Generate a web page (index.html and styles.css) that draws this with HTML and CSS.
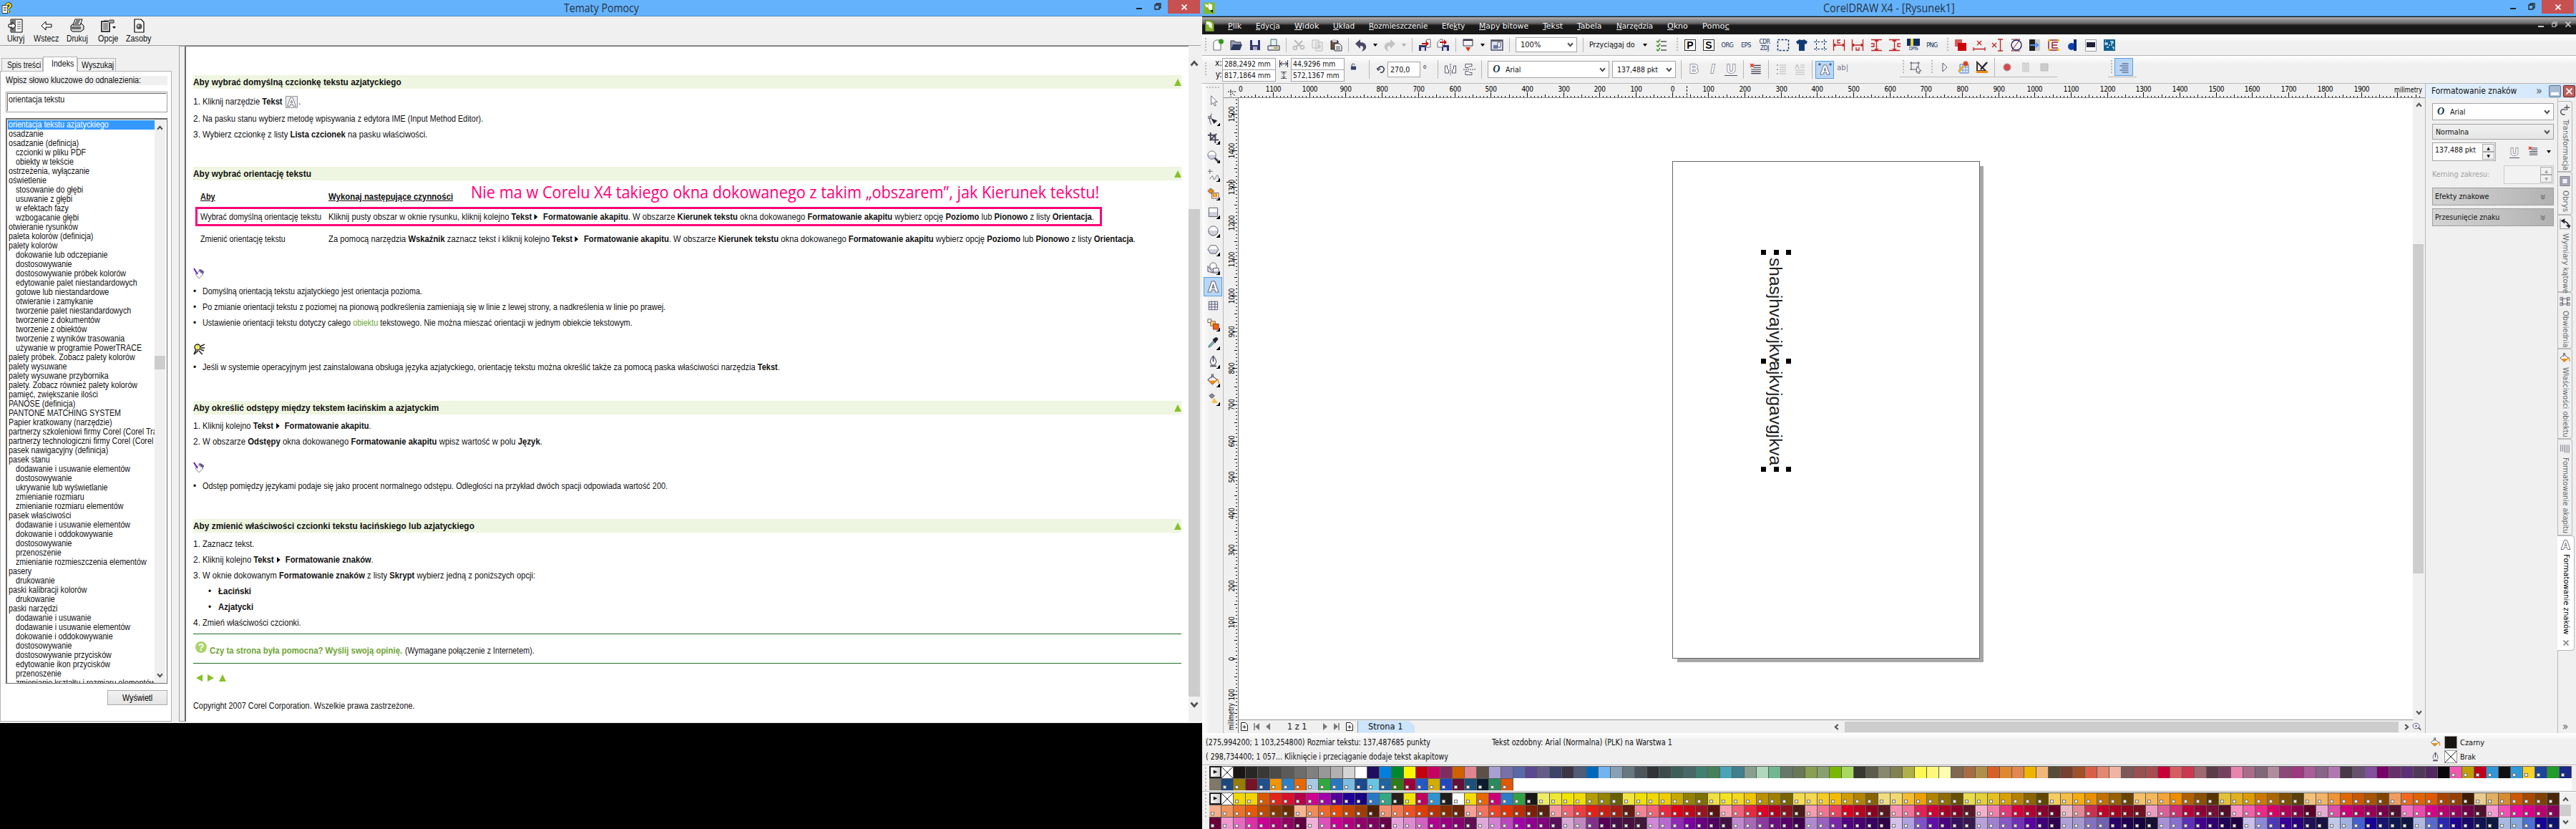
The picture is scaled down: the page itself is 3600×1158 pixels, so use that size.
FILE: index.html
```
<!DOCTYPE html>
<html lang="pl">
<head>
    <meta charset="UTF-8">
    <title>Tematy Pomocy / CorelDRAW X4</title>
    <link rel="stylesheet" href="styles.css">
</head>
<body>
    <svg class="defs">
        <linearGradient id="g" x2="0" y2="1"><stop offset=".45" stop-color="#fff"/><stop offset=".5" stop-color="#cfd0de"/></linearGradient>
        <symbol id="pen" viewBox="0 0 16 16"><path d="M3 9l5-4 6 4-6 6z" fill="#fff" stroke="#667" stroke-width=".8"/><path d="M1 1l5 8" stroke="#6a1fc0" stroke-width="2"/><path d="M7 3l3-1 5 3-1 4z" fill="#5a5a90"/></symbol>
        <symbol id="chev" viewBox="0 0 8 6"><path d="M1 1l3 3.5L7 1" fill="none" stroke="#505050" stroke-width="1.8"/></symbol>
        <symbol id="chevup" viewBox="0 0 8 6"><path d="M1 5l3-3.5L7 5" fill="none" stroke="#505050" stroke-width="1.8"/></symbol>
        <symbol id="down" viewBox="0 0 6 4"><path d="M0 0h6L3 4z"/></symbol>
        <symbol id="align" viewBox="0 0 16 16"><path d="M5 3h9M5 5.5h9M2 8h12M2 10.500h12M2 13h12" stroke="#3a3a4c"/><path d="M1 1l4 4M5 1L1 5" stroke="#e03020" stroke-width="1.500"/></symbol>
        <symbol id="bucket" viewBox="0 0 16 16"><path d="M1 8l6-5 6 5-6 6z" fill="#fff" stroke="#556"/><path d="M2 9h11l-6 5z" fill="#f08a10"/><path d="M6 6V1h2v4" fill="none" stroke="#556"/><path d="M13 7q2 1 2 6" fill="none" stroke="#f08a10" stroke-width="1.500"/></symbol>
        <symbol id="nib" viewBox="0 0 16 16"><path d="M8 1q-4 5-4 8l2 4h4l2-4q0-3-4-8z" fill="#fff" stroke="#556"/><path d="M8 2v7M4 14.500h8" stroke="#445" stroke-width="1.500"/></symbol>
        <symbol id="bigA" viewBox="0 0 16 16"><path d="M6 1h4l5 14h-4l-1-3H6l-1 3H1zM8 5L6.500 9.500h3z" fill="#fff" stroke="#667" fill-rule="evenodd"/></symbol>
        <symbol id="restore" viewBox="0 0 10 10"><path d="M1 3h6v6H1zM3 3V1h6v6H7" fill="none" stroke="currentColor" stroke-width="1.300"/></symbol>
        <symbol id="cross" viewBox="0 0 8 8"><path d="M.5.5l7 7M7.500.5l-7 7" stroke="currentColor" stroke-width="1.700"/></symbol>
        <symbol id="addpage" viewBox="0 0 10 12"><path d="M.5.5h6l3 3v8h-9z" fill="#fff" stroke="#222"/><path d="M5 4v5M2.500 6.500h5" stroke="#222"/></symbol>
    </svg>

    <!-- Pomoc -->
    <section class="help">
        <header class="titlebar">
            <svg class="app-icon" viewBox="0 0 16 16"><path d="M1 4h8v11H1z" fill="#fff" stroke="#333"/><path d="M3 7h4M3 9h4M3 11h4" stroke="#555"/><path d="M7 4q1-3 4-2 3 1 1 4-2 1-2 3M10 11v3" fill="none" stroke="#222" stroke-width="4"/><path d="M7 4q1-3 4-2 3 1 1 4-2 1-2 3M10 11v3" fill="none" stroke="#ffec20" stroke-width="2.200"/></svg>
            <h1 data-w="105">Tematy Pomocy</h1>
            <div class="winbtns"><i class="min"></i><svg class="max"><use href="#restore"/></svg><b class="close"><svg><use href="#cross"/></svg></b></div>
        </header>
        <nav class="help-tools">
            <a class="w43"><svg viewBox="0 0 20 20"><path d="M3 1h16v18H3z" fill="#fff" stroke="#000"/><path d="M3 1h7v18H3z" fill="#777"/><path d="M12 5h5M12 8h5M12 11h5M12 14h5" stroke="#555"/><path d="M0 8h5V5l5 5-5 5v-3H0z" fill="#fff" stroke="#000"/></svg><span data-w="24">Ukryj</span></a>
            <a class="w43"><svg viewBox="0 0 20 20"><path d="M3 10l6-6v4h8v4H9v4z" fill="#fff" stroke="#000"/></svg><span data-w="35">Wstecz</span></a>
            <a class="w43"><svg viewBox="0 0 20 20"><path d="M1 10l4-3h11l3 3v5l-4 3H3l-2-2z" fill="#ddd" stroke="#000"/><path d="M7 1h10l-3 8H4z" fill="#fff" stroke="#000"/><path d="M8 3h6M7 5h6M6 7h6M2 12h13M2 14h13" stroke="#000"/></svg><span data-w="30">Drukuj</span></a>
            <a class="w43"><svg viewBox="0 0 20 20"><path d="M1 4h11v14H1z" fill="#fff" stroke="#000" stroke-width="1.500"/><path d="M3 7h7M3 9h7M3 11h7M3 13h7M3 15h7M4 3h6" stroke="#333"/><path d="M9 5l3-3h6v4h-7" fill="#aaa" stroke="#333"/><path d="M16 11h5l-2.500 3z"/></svg><span data-w="28">Opcje</span></a>
            <a class="w43"><svg viewBox="0 0 20 20"><path d="M4 1h9l4 4v14H4z" fill="#fff" stroke="#000" stroke-width="1.200"/><circle cx="10.500" cy="11" r="4" fill="#555"/><circle cx="9.500" cy="10" r="1.500" fill="#ccc"/></svg><span data-w="35">Zasoby</span></a>
        </nav>
        <div class="help-body">
            <aside class="index">
                <div class="tabs"><span class="tab t1"><em data-w="47">Spis treści</em></span><span class="tab t2 active"><em data-w="31">Indeks</em></span><span class="tab t3"><em data-w="45">Wyszukaj</em></span></div>
                <div class="index-panel">
                    <label class="index-label"><span data-w="189">Wpisz słowo kluczowe do odnalezienia:</span></label>
                    <div class="field"><span data-w="78">orientacja tekstu</span></div>
                    <div class="listbox">
                        <ul id="index-list"></ul>
                        <div class="sb"><svg><use href="#chevup"/></svg><i class="thumb"></i><svg><use href="#chev"/></svg></div>
                    </div>
                    <button class="show"><span data-w="42">Wyświetl</span></button>
                </div>
            </aside>
            <div class="splitter"></div>
            <article class="topic">
                <h2><span data-w="291">Aby wybrać domyślną czcionkę tekstu azjatyckiego</span><i class="up"></i></h2>
                <ol class="first">
                    <li class="tall"><i>1.</i><span data-w="112">Kliknij narzędzie <b>Tekst</b></span><svg class="textbtn" viewBox="-2 -2 20 20"><path d="M-1.500-1.500h19v19h-19z" fill="#eee" stroke="#777"/><use href="#bigA" width="16" height="16"/></svg>.</li>
                    <li><i>2.</i><span data-w="392">Na pasku stanu wybierz metodę wpisywania z edytora IME (Input Method Editor).</span></li>
                    <li><i>3.</i><span data-w="314">Wybierz czcionkę z listy <b>Lista czcionek</b> na pasku właściwości.</span></li>
                </ol>
                <h2 class="h-b"><span data-w="165">Aby wybrać orientację tekstu</span><i class="up"></i></h2>
                <div class="table">
                    <div class="tr th"><div><b data-w="21"><u>Aby</u></b></div><div><b data-w="174"><u>Wykonaj następujące czynności</u></b></div><strong class="remark"><span data-w="878">Nie ma w Corelu X4 takiego okna dokowanego z takim „obszarem”, jak Kierunek tekstu!</span></strong></div>
                    <div class="tr marked"><div><span data-w="169">Wybrać domyślną orientację tekstu</span></div><div><span data-w="1070">Kliknij pusty obszar w oknie rysunku, kliknij kolejno <b>Tekst</b><s></s><b>Formatowanie akapitu</b>. W obszarze <b>Kierunek tekstu</b> okna dokowanego <b>Formatowanie akapitu</b> wybierz opcję <b>Poziomo</b> lub <b>Pionowo</b> z listy <b>Orientacja</b>.</span></div></div>
                    <div class="tr"><div><span data-w="119">Zmienić orientację tekstu</span></div><div><span data-w="1128">Za pomocą narzędzia <b>Wskaźnik</b> zaznacz tekst i kliknij kolejno <b>Tekst</b><s></s><b>Formatowanie akapitu</b>. W obszarze <b>Kierunek tekstu</b> okna dokowanego <b>Formatowanie akapitu</b> wybierz opcję <b>Poziomo</b> lub <b>Pionowo</b> z listy <b>Orientacja</b>.</span></div></div>
                </div>
                <svg class="note n1"><use href="#pen"/></svg>
                <ul>
                    <li><i>•</i><span data-w="307">Domyślną orientacją tekstu azjatyckiego jest orientacja pozioma.</span></li>
                    <li><i>•</i><span data-w="647">Po zmianie orientacji tekstu z poziomej na pionową podkreślenia zamieniają się w linie z lewej strony, a nadkreślenia w linie po prawej.</span></li>
                    <li><i>•</i><span data-w="601">Ustawienie orientacji tekstu dotyczy całego <a>obiektu</a> tekstowego. Nie można mieszać orientacji w jednym obiekcie tekstowym.</span></li>
                </ul>
                <svg class="note n2" viewBox="0 0 16 16"><circle cx="6" cy="5" r="4" fill="#f0e860" stroke="#222" stroke-width="1.400"/><path d="M4 8L1 15l6-5" fill="#aa9" stroke="#222" stroke-width="1.500"/><path d="M10 4l6-3M11 6h5M10 8l5 2M8 10l5 5" stroke="#222" stroke-width="1.500"/></svg>
                <ul><li><i>•</i><span data-w="807">Jeśli w systemie operacyjnym jest zainstalowana obsługa języka azjatyckiego, orientację tekstu można określić także za pomocą paska właściwości narzędzia <b>Tekst</b>.</span></li></ul>
                <h2 class="h-c"><span data-w="343">Aby określić odstępy między tekstem łacińskim a azjatyckim</span><i class="up"></i></h2>
                <ol>
                    <li><i>1.</i><span data-w="236">Kliknij kolejno <b>Tekst</b><s></s><b>Formatowanie akapitu</b>.</span></li>
                    <li><i>2.</i><span data-w="475">W obszarze <b>Odstępy</b> okna dokowanego <b>Formatowanie akapitu</b> wpisz wartość w polu <b>Język</b>.</span></li>
                </ol>
                <svg class="note n3"><use href="#pen"/></svg>
                <ul><li><i>•</i><span data-w="650">Odstęp pomiędzy językami podaje się jako procent normalnego odstępu. Odległości na przykład dwóch spacji odpowiada wartość 200.</span></li></ul>
                <h2 class="h-d"><span data-w="393">Aby zmienić właściwości czcionki tekstu łacińskiego lub azjatyckiego</span><i class="up"></i></h2>
                <ol>
                    <li><i>1.</i><span data-w="72">Zaznacz tekst.</span></li>
                    <li><i>2.</i><span data-w="239">Kliknij kolejno <b>Tekst</b><s></s><b>Formatowanie znaków</b>.</span></li>
                    <li><i>3.</i><span data-w="465">W oknie dokowanym <b>Formatowanie znaków</b> z listy <b>Skrypt</b> wybierz jedną z poniższych opcji:</span></li>
                    <li class="sub"><i>•</i><b data-w="46">Łaciński</b></li>
                    <li class="sub"><i>•</i><b data-w="49">Azjatycki</b></li>
                    <li><i>4.</i><span data-w="138">Zmień właściwości czcionki.</span></li>
                </ol>
                <div class="feedback"><b class="q">?</b><a data-w="269"><b>Czy ta strona była pomocna? Wyślij swoją opinię.</b></a><span data-w="181">(Wymagane połączenie z Internetem).</span></div>
                <svg class="arrows" viewBox="0 0 44 10"><path d="M10 0v10L1 5zM17 0l9 5-9 5zM38 0l5 10H33z" fill="#84c225"/></svg>
                <p class="copy"><span data-w="310">Copyright 2007 Corel Corporation. Wszelkie prawa zastrzeżone.</span></p>
            </article>
            <div class="sb main"><svg><use href="#chevup"/></svg><i class="thumb"></i><svg><use href="#chev"/></svg></div>
        </div>
    </section>

    <!-- CorelDRAW -->
    <section class="corel">
        <header class="titlebar">
            <svg class="app-icon corel-ico" viewBox="0 0 16 16"><path d="M0 0h16v16H0z" fill="#84b82c"/><path d="M2 2l4 1 1 4-4-1zM7 1l5 2v9l-5-3z" fill="#fff"/><path d="M9 11l4-1v5z" fill="#123"/></svg>
            <h1 data-w="184">CorelDRAW X4 - [Rysunek1]</h1>
            <div class="winbtns"><i class="min"></i><svg class="max"><use href="#restore"/></svg><b class="close"><svg><use href="#cross"/></svg></b></div>
        </header>
        <nav class="menu">
            <svg class="doc-ico" viewBox="0 0 12 16"><path d="M0 0h8l4 4v12H0z" fill="#84b82c" stroke="#555"/><path d="M1 2l4 1 1 4-4-1zM5 2l4 3v7l-4-3z" fill="#fff"/></svg>
            <span data-w="19"><u>P</u>lik</span><span data-w="34"><u>E</u>dycja</span><span data-w="34"><u>W</u>idok</span><span data-w="30"><u>U</u>kład</span><span data-w="82"><u>R</u>ozmieszczenie</span><span data-w="32">Efe<u>k</u>ty</span><span data-w="69"><u>M</u>apy bitowe</span><span data-w="28"><u>T</u>ekst</span><span data-w="35"><u>T</u>abela</span><span data-w="51"><u>N</u>arzędzia</span><span data-w="29"><u>O</u>kno</span><span data-w="38">Pomo<u>c</u></span>
            <div class="docbtns"><i></i><svg><use href="#restore"/></svg><svg><use href="#cross"/></svg></div>
        </nav>
        <div class="bar bar1">
            <i class="grip"></i>
            <svg class="ic" viewBox="0 0 18 18"><path d="M3 5l3-3h7v14H3z" fill="#fff" stroke="#667"/><circle cx="13.500" cy="4" r="3.500" fill="#2f9a18"/></svg>
            <svg class="ic" viewBox="0 0 18 18"><path d="M1 16V3h5l2 2h7v3" fill="#9aa0b8" stroke="#334"/><path d="M1 16L4 8h13l-3 8z" fill="#2b3a5e"/></svg>
            <svg class="ic" viewBox="0 0 18 18"><path d="M2 2h14v14H2z" fill="#33356e"/><path d="M5 2h8v7H5z" fill="#eef"/><path d="M6 11h6v5H6z" fill="#aab"/></svg>
            <svg class="ic" viewBox="0 0 18 18"><path d="M5 1h8v9H5z" fill="#e4f6f4" stroke="#467"/><path d="M1 10h16v6H1z" fill="#e8e8ee" stroke="#223"/><path d="M9 13h6" stroke="#a80" stroke-width="1.500"/></svg>
            <i class="sep"></i>
            <svg class="ic" viewBox="0 0 18 18"><path d="M3 2l9 9M14 3L5 12" stroke="#b8b8b8" stroke-width="2"/><circle cx="4" cy="13" r="2.500" fill="none" stroke="#b8b8b8" stroke-width="1.500"/><circle cx="14" cy="12" r="2.500" fill="none" stroke="#b8b8b8" stroke-width="1.500"/></svg>
            <svg class="ic" viewBox="0 0 18 18"><path d="M2 2h9v11H2zM7 5h9v12H7z" fill="#eee" stroke="#bbb"/><path d="M9 9h5M9 11h5M9 13h5" stroke="#bbb"/></svg>
            <svg class="ic" viewBox="0 0 18 18"><path d="M2 3h10v12H2z" fill="#6b5040" stroke="#333"/><path d="M4 1h6v4H4z" fill="#ccd"/><path d="M7 7h7l3 3v7H7z" fill="#fff" stroke="#334"/><path d="M9 11h6M9 13h6M9 15h6" stroke="#556"/></svg>
            <i class="sep"></i>
            <svg class="ic" viewBox="0 0 18 18"><path d="M1 7l7-6v4q9 0 8 8-1 3-6 5 5-8-2-8v4z" fill="#4a4a62"/></svg>
            <svg class="dd"><use href="#down"/></svg>
            <svg class="ic" viewBox="0 0 18 18"><path d="M17 7l-7-6v4Q1 5 2 13q1 3 6 5-5-8 2-8v4z" fill="#c2c2c2"/></svg>
            <svg class="dd off"><use href="#down"/></svg>
            <i class="sep"></i>
            <svg class="ic" viewBox="0 0 18 18"><path d="M1 9h10v8H1z" fill="#33356e"/><path d="M4 12h5v5H4z" fill="#dde"/><path d="M11 2l3-1h3v11h-6z" fill="#fff" stroke="#667"/><path d="M5 6h6V3l4 4-4 4V8H5z" fill="#cc1010"/></svg>
            <svg class="ic" viewBox="0 0 18 18"><path d="M7 9h10v8H7z" fill="#33356e"/><path d="M9 12h5v5H9z" fill="#dde"/><path d="M1 5l4-4h3v11H1z" fill="#fff" stroke="#667"/><path d="M4 4h6V1l4 4-4 4V6H4z" fill="#cc1010"/></svg>
            <i class="sep"></i>
            <svg class="ic" viewBox="0 0 18 18"><path d="M2 1h13v9H2z" fill="#f4f4f8" stroke="#334"/><path d="M2 1h13v2H2z" fill="#334"/><path d="M5 12h7l-3 6z" fill="#e33010"/></svg>
            <svg class="dd"><use href="#down"/></svg>
            <svg class="ic" viewBox="0 0 18 18"><path d="M1 2h16v14H1z" fill="#dde4f2" stroke="#556" stroke-width="1.500"/><path d="M1 2h16v2H1z" fill="#556"/><path d="M4 9h6v5H4z" fill="#6878a8"/><path d="M10 5h4v7h-4z" fill="#fff" stroke="#556"/></svg>
            <i class="sep"></i>
            <div class="combo zoom"><span data-w="28">100%</span><svg><use href="#chev"/></svg></div>
            <i class="sep"></i>
            <span class="snap" data-w="64">Przyciągaj do</span>
            <svg class="dd snapdd"><use href="#down"/></svg>
            <svg class="ic" viewBox="0 0 18 18"><path d="M8 4h8M8 10h8M8 16h8" stroke="#556" stroke-width="1.500"/><path d="M2 3l2 2 3-4M2 9l2 2 3-4M2 15l2 2 3-4" fill="none" stroke="#3a9020" stroke-width="1.500"/></svg>
            <i class="grip g2"></i>
            <b class="ic box">P</b><b class="ic box">S</b><span class="ic px">ORG</span><span class="ic px">EPS</span><span class="ic px two">CDR<br>ZDJ</span>
            <svg class="ic" viewBox="0 0 18 18"><path d="M1.500 1.500h15v15h-15z" fill="none" stroke="#103070" stroke-width="1.500" stroke-dasharray="3 2"/></svg>
            <svg class="ic" viewBox="0 0 18 18"><path d="M1 4l5-3q3 2 6 0l5 3-2 4-2-1v10H5V7L3 8z" fill="#123a70"/></svg>
            <svg class="ic" viewBox="0 0 18 18"><path d="M3.500 1v16M14.500 1v16M0 4.500h18M0 14.500h18" fill="none" stroke="#103070" stroke-dasharray="3 2"/></svg>
            <svg class="ic" viewBox="0 0 18 18"><path d="M1.500 1v16M16.500 1v16M1.500 9h15M4 7L2 9l2 2M14 7l2 2-2 2M11 2H7v4h4" fill="none" stroke="#c02020" stroke-width="1.300"/></svg>
            <svg class="ic" viewBox="0 0 18 18"><path d="M1.500 1v16M16.500 1v16M1.500 9h15M4 7L2 9l2 2M14 7l2 2-2 2M7 12v4h4v-4" fill="none" stroke="#c02020" stroke-width="1.300"/></svg>
            <svg class="ic" viewBox="0 0 18 18"><path d="M2 1.500h15M2 16.500h15M9.500 1.500v15M7 4l2.500-2.500L12 4M7 14l2.500 2.500L12 14M2 7h4v4H2" fill="none" stroke="#c02020" stroke-width="1.300"/></svg>
            <svg class="ic" viewBox="0 0 18 18"><path d="M1 1.500h15M1 16.500h15M8.500 1.500v15M6 4l2.500-2.500L11 4M6 14l2.500 2.500L11 14M17 7h-4v4h4" fill="none" stroke="#c02020" stroke-width="1.300"/></svg>
            <span class="ic dpi">DPIS</span><span class="ic px">PNG</span>
            <i class="grip g2"></i>
            <svg class="ic" viewBox="0 0 18 18"><path d="M1 1h10v10H1z" fill="#d06060"/><path d="M5 6h12v11H5z" fill="#cc0008"/></svg>
            <svg class="ic" viewBox="0 0 18 18"><path d="M1 12v5M17 12v5M1 14.500h16M6 3l6 6M12 3L6 9" fill="none" stroke="#c02020" stroke-width="1.300"/></svg>
            <svg class="ic" viewBox="0 0 18 18"><path d="M9 1h7M9 17h7M12.500 1v16M1 6l6 6M7 6l-6 6" fill="none" stroke="#c02020" stroke-width="1.300"/></svg>
            <svg class="ic" viewBox="0 0 18 18"><circle cx="9" cy="9" r="7" fill="none" stroke="#201860" stroke-width="1.300"/><path d="M2 1h12L2 17h12" fill="none" stroke="#702038"/></svg>
            <svg class="ic" viewBox="0 0 18 18"><path d="M1 1h8v16H1z" fill="#222"/><path d="M9 1h7v16H9z" fill="#ccc"/><path d="M2 8h8V5l5 4-5 4v-3H2z" fill="#5898f0"/></svg>
            <svg class="ic" viewBox="0 0 18 18"><path d="M2 2h14M2 2v14M7 5h8M7 5v8h8M7 9h7M2 16h14" fill="none" stroke="#a02030" stroke-width="1.500"/><path d="M1 1h3v3H1zM14 1h3v3h-3zM1 14h3v3H1zM14 14h3v3h-3z" fill="#e8c020"/></svg>
            <svg class="ic" viewBox="0 0 18 18"><circle cx="8" cy="11" r="5" fill="#1040b0"/><path d="M11 1h4v16h-4z" fill="#082870"/></svg>
            <svg class="ic" viewBox="0 0 18 18"><path d="M1.500 1.500h15v16h-15z" fill="#fff" stroke="#999"/><path d="M3 5h12v7H3z" fill="#202038"/></svg>
            <svg class="ic" viewBox="0 0 18 18"><path d="M1 1h16v16H1z" fill="#106090"/><path d="M3 6h3v2H3zM10 4h4v2h-2v4M5 12h3M13 12h2v3M3 3h1M8 9h2" fill="none" stroke="#d0e8f4" stroke-width="1.300"/></svg>
        </div>
        <div class="bar bar2">
            <i class="grip"></i>
            <div class="pair lbl"><span>x:</span><span>y:</span></div>
            <div class="pair nums"><span><em data-w="65">288,2492 mm</em></span><span><em data-w="65">817,1864 mm</em></span></div>
            <div class="pair szi"><svg viewBox="0 0 12 10"><path d="M.5 0v10M11.500 0v10M1 5h10M4 2L1 5l3 3M8 2l3 3-3 3" fill="none" stroke="#334"/></svg><svg viewBox="0 0 10 12"><path d="M0 .5h10M0 11.500h10M5 1v10M2 4l3-3 3 3M2 8l3 3 3-3" fill="none" stroke="#334"/></svg></div>
            <div class="pair nums"><span><em data-w="59">44,9296 mm</em></span><span><em data-w="65">572,1367 mm</em></span></div>
            <svg class="lock" viewBox="0 0 10 11"><path d="M1 5h8v5.500H1z" fill="#33406a"/><path d="M2.500 5V2q2-2 4 0v1" fill="none" stroke="#334"/></svg>
            <i class="sep"></i>
            <svg class="rot" viewBox="0 0 12 12"><path d="M2 5q2-4 6-3 4 3 1 7-2 2-4 1M0 4l2 3 3-2" fill="none" stroke="#334" stroke-width="1.500"/></svg>
            <div class="combo angle"><span data-w="27">270,0</span></div><span class="deg">°</span>
            <i class="sep"></i>
            <svg class="ic mir" viewBox="0 0 18 18"><path d="M1.500 4v10h5v-4l-2-2V4zM16.500 4v10h-5v-4l2-2V4z" fill="#fff" stroke="#556"/><path d="M9 1v16" stroke="#445" stroke-dasharray="2 1"/></svg>
            <svg class="ic mir" viewBox="0 0 18 18"><path d="M13 1.500H4v5h4l2-2h3zM13 16.500H4v-5h4l2 2h3z" fill="#fff" stroke="#556"/><path d="M1 9h17" stroke="#445" stroke-dasharray="2 1"/></svg>
            <i class="sep"></i>
            <div class="combo font"><i class="o">O</i><span data-w="21">Arial</span><svg><use href="#chev"/></svg></div>
            <div class="combo size"><span data-w="57">137,488 pkt</span><svg><use href="#chev"/></svg></div>
            <i class="sep"></i>
            <b class="ic out">B</b><b class="ic out it">I</b><b class="ic out ul">U</b>
            <i class="sep"></i><svg class="ic"><use href="#align"/></svg><i class="sep"></i>
            <svg class="ic" viewBox="0 0 18 18"><path d="M7 3h9M7 6h9M7 9h9M7 12h9M7 15h9" stroke="#bbb"/><path d="M3 3h2M3 9h2M3 15h2" stroke="#aaa" stroke-width="2"/></svg>
            <svg class="ic" viewBox="0 0 18 18"><path d="M10 3h6M10 6h6M3 10h13M3 13h13M3 16h13" stroke="#bbb"/><path d="M3 8l2.500-6L8 8" fill="none" stroke="#aaa"/></svg>
            <i class="sep"></i>
            <span class="ic on"><svg viewBox="-2 -2 20 19"><use href="#bigA" width="16" height="16"/><path d="M-2 0h4M0-2v4M14 0h4M16-2v4" stroke="#334"/></svg></span><span class="ic ab">ab|</span>
            <div class="float f1">
                <i class="grip"></i>
                <svg class="ic" viewBox="0 0 18 18"><path d="M3 1v12M13 1v12M1 3h14M1 12h14" stroke="#556"/><path d="M11 8l6 6h-3l1 3-2 1-1-3-2 1z" fill="#fff" stroke="#556"/></svg>
                <i class="grip g3"></i>
                <svg class="ic" viewBox="0 0 18 18"><path d="M6 3l6 6-6 6z" fill="#fff" stroke="#556"/></svg>
                <svg class="ic" viewBox="0 0 18 18"><path d="M4 5h12v12H4z" fill="#e8f0ff" stroke="#4878c8"/><path d="M4 9h12M4 13h12M8 5v12M12 5v12" stroke="#7098d8"/><circle cx="12" cy="4" r="3.500" fill="#d84820"/><path d="M2 15L9 7" stroke="#e0b030" stroke-width="3"/></svg>
                <svg class="ic" viewBox="0 0 18 18"><path d="M2 2l12 12H2z" fill="none" stroke="#433" stroke-width="2"/><path d="M7 12l9-10" stroke="#223" stroke-width="2.500"/><path d="M1 14h16v3H1z" fill="#f08a10"/></svg>
                <i class="sep"></i>
                <svg class="ic" viewBox="0 0 18 18"><circle cx="9" cy="9" r="5" fill="#d84850" stroke="#999"/></svg>
                <svg class="ic" viewBox="0 0 18 18"><path d="M5 3h3v12H5zM10 3h3v12h-3z" fill="#e4e4e4" stroke="#bbb"/></svg>
                <svg class="ic" viewBox="0 0 18 18"><path d="M4 4h10v10H4z" fill="#ccc" stroke="#bbb"/></svg>
            </div>
            <div class="float f2"><i class="grip"></i><span class="ic on"><svg viewBox="0 0 18 18"><path d="M6 4h9M3 7h12M6 10h9M3 13h12M6 16h9" stroke="#446"/></svg></span></div>
        </div>
        <div class="work">
            <div class="toolbox">
                <i class="hgrip"></i>
                <div class="t"><svg viewBox="0 0 18 18"><path d="M6 2v13l3-3 2 5 2-1-2-5h4z" fill="#fff" stroke="#667"/></svg></div>
                <div class="t fly"><svg viewBox="0 0 18 18"><path d="M7 1Q1 8 6 17M2 5h4v3H2z" fill="none" stroke="#667" stroke-width="1.200"/><path d="M6 8l9 3-5 5z" fill="#223"/></svg></div>
                <div class="t fly"><svg viewBox="0 0 18 18"><path d="M5 1v11h12M1 5h11v12M4 13L14 3" fill="none" stroke="#445" stroke-width="2"/></svg></div>
                <div class="t fly"><svg viewBox="0 0 18 18"><path d="M11 11l6 6" stroke="#445" stroke-width="3"/><circle cx="7" cy="7" r="6" fill="url(#g)" stroke="#667"/></svg></div>
                <div class="t fly"><svg viewBox="0 0 18 18"><path d="M4 0v7M1 3.500h7M4 15q4-8 5-2t4-1 4 3" fill="none" stroke="#667"/></svg></div>
                <div class="t fly"><svg viewBox="0 0 18 18"><path d="M1 5l4-4 5 4-5 4z" fill="#f08a10" stroke="#556"/><path d="M7 8h10v8H7z" fill="#fff" stroke="#556"/><path d="M9 6v7h5v-3h-4" fill="none" stroke="#f08a10" stroke-width="2"/></svg></div>
                <div class="t fly"><svg viewBox="0 0 18 18"><path d="M2.500 2.500h13v13h-13z" fill="url(#g)" stroke="#556"/></svg></div>
                <div class="t fly"><svg viewBox="0 0 18 18"><circle cx="9" cy="9" r="7" fill="url(#g)" stroke="#556"/></svg></div>
                <div class="t fly"><svg viewBox="0 0 18 18"><path d="M1 9l4-6h8l4 6-4 6H5z" fill="url(#g)" stroke="#556"/></svg></div>
                <div class="t fly"><svg viewBox="0 0 18 18"><path d="M1 6v8l8 2z" fill="#dde" stroke="#556"/><circle cx="9" cy="6" r="5" fill="#fff" stroke="#556"/><path d="M9 9h8v7H9z" fill="url(#g)" stroke="#556"/></svg></div>
                <div class="t sel"><svg><use href="#bigA"/></svg></div>
                <div class="t"><svg viewBox="0 0 18 18"><path d="M2.500 3.500h13v12h-13zM2.500 7.500h13M2.500 11.500h13M6.500 3v12M11.500 3v12" fill="#eef" stroke="#556"/></svg></div>
                <div class="t fly"><svg viewBox="0 0 18 18"><path d="M1 2h5v5H1z" fill="#fff" stroke="#556"/><path d="M5 5h7v7H5z" fill="#fcc860" stroke="#865"/><path d="M9 9h8v8H9z" fill="#f86410" stroke="#733"/></svg></div>
                <div class="t fly"><svg viewBox="0 0 18 18"><path d="M2 16l1-3 7-7 2 2-7 7z" fill="#8cb8b0" stroke="#467"/><path d="M8 5l2-2 3-2q4 1 3 4l-2 2-2 3z" fill="#223"/></svg></div>
                <div class="t fly"><svg><use href="#nib"/></svg></div>
                <div class="t fly"><svg><use href="#bucket"/></svg></div>
                <div class="t fly"><svg viewBox="0 0 18 18"><path d="M3 5l4-3 4 3-4 4z" fill="#889" stroke="#556"/><path d="M10 8l6 8H7z" fill="#f8c050"/></svg></div>
            </div>
            <div class="sheet">
                <svg class="hruler" id="hruler"></svg>
                <svg class="vruler" id="vruler"></svg>
                <div class="canvas">
                    <div class="page"></div>
                    <div class="artistic"><span data-w="290">shasjhvajvjkvajkvjgavgjkva</span></div>
                    <div class="handles"><i></i><i></i><i></i><i></i><i class="mid">×</i><i></i><i></i><i></i><i></i></div>
                </div>
                <div class="sb canvas-sb"><svg><use href="#chevup"/></svg><i class="thumb"></i><svg><use href="#chev"/></svg></div>
                <div class="pagenav">
                    <svg class="pg"><use href="#addpage"/></svg>
                    <svg class="nv" viewBox="0 0 8 10"><path d="M1 0v10" stroke="#777" stroke-width="1.500"/><path d="M8 0v10L2 5z" fill="#777"/></svg>
                    <svg class="nv" viewBox="0 0 8 10"><path d="M7 0v10L1 5z" fill="#777"/></svg>
                    <span data-w="27" class="count">1 z 1</span>
                    <svg class="nv" viewBox="0 0 8 10"><path d="M1 0v10l6-5z" fill="#777"/></svg>
                    <svg class="nv" viewBox="0 0 8 10"><path d="M7 0v10" stroke="#777" stroke-width="1.500"/><path d="M0 0v10l6-5z" fill="#777"/></svg>
                    <svg class="pg"><use href="#addpage"/></svg>
                    <div class="pagetab"><span data-w="49">Strona 1</span></div>
                    <div class="hsb"><svg class="lt"><use href="#chev"/></svg><i></i><svg class="rt"><use href="#chev"/></svg></div>
                    <svg class="mag" viewBox="0 0 14 12"><path d="M9 7l4 4" stroke="#556" stroke-width="2"/><ellipse cx="6" cy="5" rx="5" ry="4" fill="#eef" stroke="#556"/><circle cx="6" cy="5" r="1.500" fill="#778"/></svg>
                </div>
            </div>
            <div class="docker">
                <div class="dhead"><span data-w="119">Formatowanie znaków</span><em>»</em><i class="dmin"></i><i class="dclose"><svg><use href="#cross"/></svg></i></div>
                <div class="dbody">
                    <div class="dpanel">
                        <div class="combo d1"><i class="o">O</i><span data-w="21">Arial</span><svg><use href="#chev"/></svg></div>
                        <div class="combo d2"><span data-w="46">Normalna</span><svg><use href="#chev"/></svg></div>
                        <div class="drow"><div class="combo spin"><span data-w="57">137,488 pkt</span><div class="ud"><i>▲</i><i>▼</i></div></div><b class="out ul">U</b><svg class="al"><use href="#align"/></svg><svg class="dd"><use href="#down"/></svg></div>
                        <div class="drow off"><span data-w="80">Kerning zakresu:</span><div class="combo spin"><div class="ud"><i>▲</i><i>▼</i></div></div></div>
                        <div class="roll"><span data-w="76">Efekty znakowe</span><b>»</b></div>
                        <div class="roll"><span data-w="90">Przesunięcie znaku</span><b>»</b></div>
                    </div>
                    <div class="dtabs">
                        <div class="dt a"><svg viewBox="0 0 16 16"><path d="M9 8a4 4 0 1 0-1 6M11 0v8M7 4h8" fill="none" stroke="#556" stroke-width="1.500"/></svg><span data-h="71">Transformacja</span></div>
                        <div class="dt b"><svg viewBox="0 0 16 16"><path d="M1 1h14v14H1z" fill="#aab" stroke="#778"/><path d="M4 4h8v8H4z" fill="#eef" stroke="#889"/></svg><span data-h="30">Obrys</span></div>
                        <div class="dt c"><svg viewBox="0 0 16 16"><path d="M1 0v15h14" fill="none" stroke="#889"/><path d="M4 3q9 1 10 9M3 3l4-2v5zM14 13l-3-3h5z" fill="none" stroke="#223" stroke-width="1.500"/></svg><span data-h="84">Wymiary kątowe</span></div>
                        <div class="dt d"><svg viewBox="0 0 16 16"><path d="M3 4h10M3 12h10M3 4l2 4-2 4M13 4l-2 4 2 4M1 2h4v4H1zM11 2h4v4h-4zM1 10h4v4H1zM11 10h4v4h-4z" fill="none" stroke="#667"/></svg><span data-h="51">Obwiednia</span></div>
                        <div class="dt e"><svg><use href="#bucket"/></svg><span data-h="98">Właściwości obiektu</span></div>
                        <div class="dt f"><svg viewBox="0 0 16 16"><path d="M2 3v10M5 3v10M8 3v12M11 3v12M14 3v12" stroke="#667"/></svg><span data-h="106">Formatowanie akapitu</span></div>
                        <div class="dt g act"><svg><use href="#bigA"/></svg><span data-h="112">Formatowanie znaków</span><svg class="x"><use href="#cross"/></svg></div>
                        <em>»</em>
                    </div>
                </div>
            </div>
        </div>
        <footer class="status">
            <div><span class="s1" data-w="314">(275,994200; 1 103,254800) Rozmiar tekstu: 137,487685 punkty</span><span data-w="252">Tekst ozdobny: Arial (Normalna) (PLK) na Warstwa 1</span><p class="fill"><svg><use href="#bucket"/></svg><i class="black"></i><em data-w="34">Czarny</em></p></div>
            <div><span data-w="339">( 298,734400; 1 057... Kliknięcie i przeciąganie dodaje tekst akapitowy</span><p class="fill"><svg><use href="#nib"/></svg><i class="none"></i><em data-w="22">Brak</em></p></div>
        </footer>
        <div class="palette p1"><i class="grip"></i><div class="swatches" id="pal1"></div></div>
        <div class="palette p2"><i class="grip"></i><div class="swatches" id="pal2"></div><div class="sb"><svg><use href="#chevup"/></svg><i class="thumb"></i><svg><use href="#chev"/></svg></div></div>
    </section>
    <script src="script.js"></script>
</body>
</html>
```
FILE: styles.css
```
* {
    box-sizing: border-box;
    margin: 0;
    padding: 0;
}

html { height: 1158px; overflow: hidden; }

body {
    width: 3600px;
    height: 1158px;
    overflow: hidden;
    display: flex;
    align-items: flex-start;
    background: #000;
    color: #111;
    font: 11px "DejaVu Sans Condensed", "DejaVu Sans", sans-serif;
}

ul, ol { list-style: none; }
em { font-style: normal; }
svg { flex: none; display: block; }
.defs { position: absolute; width: 0; height: 0; }

/* set by the fitting script */
[data-w], [data-h] {
    display: inline-block;
    flex: none;
    white-space: nowrap;
    transform-origin: 0 50%;
}
[data-h] { transform-origin: 50% 0; }

.titlebar {
    position: relative;
    height: 23px;
    background: #64b2fc;
    display: flex;
    justify-content: center;
    align-items: center;
}
.titlebar h1 {
    font: 16px "Open Sans", "Noto Sans", sans-serif;
    color: #263442;
    line-height: 22px;
}
.app-icon { position: absolute; left: 2px; top: 3px; width: 16px; height: 17px; }
.winbtns {
    position: absolute;
    right: 3px;
    top: 0;
    display: flex;
    color: #222;
}
.min { width: 8px; height: 2px; background: #222; margin: 11px 17px 0 0; }
.max { width: 10px; height: 10px; margin: 4px 9px 0 0; }
.close { width: 45px; height: 19px; background: #c75050; color: #fff; display: grid; place-items: center; }
.close svg { width: 8px; height: 8px; }

/* scrollbars */
.sb {
    display: flex;
    flex-direction: column;
    align-items: center;
    justify-content: space-between;
    background: #f0f0f0;
}
.sb svg { width: 9px; height: 7px; }
.sb .thumb { width: 100%; background: #cdcdcd; }

/* ---- help window ---- */
.help {
    width: 1680px;
    height: 1010px;
    background: #f0f0f0;
    font-family: "Liberation Sans", Arial, sans-serif;
    border-right: 2px solid #f0f0f0;
    border-bottom: 2px solid #f0f0f0;
}
.help .titlebar { margin-right: -2px; border-bottom: 1px solid #5d8fbd; }
.help-tools {
    display: flex;
    height: 41px;
    border-bottom: 1px solid #a0a0a0;
}
.w43 {
    width: 43px;
    display: flex;
    flex-direction: column;
    align-items: center;
    padding-top: 3px;
    font-size: 12px;
}
.w43 svg { width: 20px; height: 20px; overflow: visible; margin-bottom: 1px; }
.help-body { display: flex; height: 944px; }
.index { width: 240px; padding-top: 15px; font-size: 12px; }
.tabs { display: flex; align-items: flex-end; height: 20px; padding-left: 2px; }
.tab {
    height: 18px;
    border: 1px solid #b4b4b4;
    border-bottom: none;
    padding: 2px 0 0 7px;
    line-height: 15px;
}
.tab em { font-size: 12px; }
.t1 { width: 58px; }
.t2 { width: 48px; }
.t3 { width: 54px; padding-left: 5px; }
.tab.active { height: 21px; margin-bottom: -1px; background: #fff; padding-left: 11px; position: relative; }
.index-panel {
    height: 909px;
    background: #fff;
    border: 1px solid #b4b4b4;
    padding: 6px 5px 0 7px;
    display: flex;
    flex-direction: column;
}
.index-label { background: #f0f0f0; height: 13px; line-height: 12px; }
.field {
    margin-top: 9px;
    height: 29px;
    border: 1px solid #a0a0a0;
    padding: 2px 2px 0 3px;
    line-height: 17px;
    box-shadow: inset 0 0 0 1px #fff, inset 2px 2px 0 #696969;
}
.listbox {
    margin-top: 8px;
    height: 790px;
    border: 2px solid #696969;
    border-width: 2px 1px 1px 2px;
    display: flex;
}
#index-list { width: 206px; padding: 1px 0 0 1px; overflow: hidden; }
#index-list li { height: 13px; line-height: 13px; white-space: nowrap; padding-left: 1px; }
#index-list li.chosen { background: #3399ff; color: #fff; }
#index-list li span { display: inline-block; transform: scaleX(.892); transform-origin: 0 50%; }
#index-list li.child { padding-left: 11px; }
.listbox .sb { width: 15px; padding: 8px 0 7px; position: relative; }
.listbox .thumb { position: absolute; top: 330px; height: 19px; }
.show {
    align-self: flex-end;
    width: 84px;
    height: 21px;
    margin-top: 9px;
    border: 1px solid #acacac;
    background: linear-gradient(#f2f2f2, #e4e4e4);
    font: 12px "Liberation Sans", Arial, sans-serif;
}
.splitter { flex: none; width: 10px; margin-left: 10px; border: 1px solid #a0a0a0; border-right: 2px solid #696969; }
.topic {
    width: 1401px;
    flex: none;
    background: #fff;
    border-top: 1px solid #696969;
    padding: 40px 10px 0 10px;
    font-size: 12px;
}
.topic h2 {
    height: 19px;
    background: #eef5e0;
    display: flex;
    justify-content: space-between;
    align-items: center;
    font-size: 13px;
}
.up { border: 5px solid transparent; border-top: none; border-bottom: 10px solid #84c225; }
.topic li { display: flex; align-items: center; height: 22px; }
.topic li > i { width: 13px; font-style: normal; flex: none; }
.topic li.sub { padding-left: 21px; }
.topic li.sub > i { width: 14px; }
.topic .tall { height: 24px; margin-bottom: 1px; }
.topic ol { padding-top: 5px; }
.topic ol.first { padding-top: 6px; }
.topic s {
    display: inline-block;
    border: 4px solid transparent;
    border-left: 5px solid #000;
    border-right: none;
    margin: 0 8px 0 4px;
}
.topic a { color: #6ea535; }
.textbtn { width: 17px; height: 17px; margin: 0 1px 0 4px; }
.topic h2.h-b { margin-top: 34px; }
.table { padding: 8px 0 0 3px; }
.tr { display: flex; align-items: center; height: 30px; padding-left: 7px; }
.tr > div:first-child { width: 179px; flex: none; }
.tr.th { position: relative; }
.remark {
    position: absolute;
    left: 385px;
    top: -6px;
    color: #ff0078;
    font: 23px/28px "Open Sans", "Noto Sans", sans-serif;
}
.tr.marked { width: 1267px; height: 27px; border: 3px solid #ff0078; padding-left: 4px; margin: -1px 0 3px; }
.note { width: 16px; height: 16px; }
.n1 { margin: 25px 0 6px; }
.n2 { margin: 18px 0 6px; }
.n3 { margin: 17px 0 7px; }
.h-c { margin-top: 36px; }
.h-d { margin-top: 35px; }
.feedback {
    margin-top: 4px;
    height: 42px;
    border: 1px solid #1f6e28;
    border-width: 1px 0;
    display: flex;
    align-items: center;
    gap: 4px;
    padding: 6px 0 0 3px;
}
.q {
    width: 16px;
    height: 16px;
    margin-top: -10px;
    border-radius: 8px;
    background: #a8d468;
    color: #fff;
    text-align: center;
    line-height: 16px;
    font-size: 14px;
}
.arrows { width: 44px; height: 10px; margin: 15px 0 26px 3px; }
.copy { line-height: 16px; }
.main { width: 16px; padding: 20px 0 19px; position: relative; flex: none; }
.main .thumb { position: absolute; top: 228px; height: 681px; }
.main svg { width: 12px; height: 9px; }

/* ---- CorelDRAW window ---- */
.corel { width: 1920px; height: 1158px; background: #f0f0f0; overflow: hidden; }
.corel .titlebar { border-bottom: 1px solid #4478a8; }
.menu {
    position: relative;
    height: 25px;
    border-top: 1px solid #111;
    background: linear-gradient(#b0b0b0, #666 35%, #222 46%, #181818 50%);
    color: #f4f4f4;
    display: flex;
    align-items: center;
    gap: 20px;
    padding-left: 36px;
}
.doc-ico { position: absolute; left: 4px; top: 4px; width: 13px; height: 16px; }
.docbtns { position: absolute; right: 7px; top: 6px; display: flex; gap: 11px; color: #c8c8c8; }
.docbtns i { width: 8px; height: 2px; background: #c8c8c8; margin-top: 6px; }
.docbtns svg { width: 8px; height: 8px; }
.bar {
    position: relative;
    display: flex;
    align-items: center;
    background: linear-gradient(#fff, #f0f0f0 12px);
    border-bottom: 1px solid #b8b8b8;
}
.bar1 { height: 30px; }
.bar2 { height: 39px; }
.grip {
    flex: none;
    width: 2px;
    height: 20px;
    margin: 0 3px 0 4px;
    background: repeating-linear-gradient(#bbb 0 2px, transparent 2px 4px);
}
.g2 { margin: 0 4px 0 8px; }
.g3 { margin: 0 4px 0 9px; }
.ic { flex: none; width: 18px; height: 18px; margin: 0 4px; }
.sep { flex: none; width: 1px; height: 20px; margin: 0 4px; background: #b8b8b8; }
.bar2 .sep { height: 26px; }
.dd { width: 6px; height: 4px; margin: 0 4px; }
.dd.off { fill: #aaa; }
.combo {
    flex: none;
    display: flex;
    align-items: center;
    background: #fff;
    border: 1px solid #a4a4a8;
    padding-left: 6px;
}
.combo svg { width: 9px; height: 7px; margin: 0 4px 0 auto; }
.zoom { width: 86px; height: 21px; margin: 0 4px; }
.snap { margin-left: 4px; }
.snapdd { margin: 0 7px 0 11px; }
.box { border: 1px solid #333; background: #fff; width: 16px; height: 16px; margin: 0 5px; text-align: center; font: bold 14px/14px "Liberation Sans", sans-serif; color: #000; }
.px, .dpi { color: #103060; font: 9px/18px "DejaVu Sans Condensed", "DejaVu Sans", sans-serif; text-align: center; letter-spacing: -.5px; }
.px.two { line-height: 9px; font-size: 8.500px; }
.dpi { font-size: 7px; line-height: 8px; padding-top: 10px; background: linear-gradient(90deg, #103060 5px, #e8d040 5px 9px, #103060 9px) no-repeat 0 0/18px 10px; }
.pair { display: flex; flex-direction: column; }
.lbl { width: 19px; text-align: right; font-size: 12px; }
.lbl span { height: 16px; }
.nums span { width: 75px; height: 17px; line-height: 15px; background: #fff; border: 1px solid #a4a4a8; padding-left: 2px; }
.nums span + span { margin-top: -1px; }
.szi { width: 21px; align-items: center; gap: 6px; }
.szi svg { width: 12px; height: 10px; }
.lock { width: 9px; height: 10px; margin: -8px 13px 0 8px; }
.rot { width: 12px; height: 12px; margin: 0 3px 0 6px; }
.angle { width: 46px; height: 22px; padding-left: 3px; }
.deg { font-size: 14px; margin: 0 11px 0 3px; color: #555; }
.font { width: 170px; height: 24px; margin-left: 4px; }
.size { width: 89px; height: 24px; margin: 0 3px 0 4px; }
.o { font: italic bold 14px "Liberation Serif", serif; color: #134; margin-right: 8px; }
.out { font: bold 17px/18px "Liberation Sans", sans-serif; text-align: center; color: #fff; -webkit-text-stroke: 1.600px #778; paint-order: stroke fill; }
.it { font-style: italic; }
.ul { border-bottom: 1px solid #556; }
.on { width: 26px; height: 25px; margin: 0; border: 1px solid #5a9fe0; background: #b8d6f6; display: grid; place-items: center; }
.on svg { width: 19px; height: 18px; }
.ab { color: #778; font-size: 11px; }
.float { position: absolute; top: 2px; height: 28px; display: flex; align-items: center; border-bottom: 1px solid #b8b8b8; }
.f1 { left: 975px; width: 220px; }
.f2 { left: 1266px; width: 40px; }

.work { display: flex; height: 907px; }
.toolbox {
    width: 30px;
    background: linear-gradient(90deg, #fff, #f0f0f0 10px);
    border-right: 1px solid #b8b8b8;
    padding: 4px 0 0 2px;
}
.hgrip { display: block; width: 18px; height: 2px; margin: 0 0 4px 4px; background: repeating-linear-gradient(90deg, #bbb 0 2px, transparent 2px 4px); }
.t { position: relative; width: 26px; height: 26.060px; display: grid; place-items: center; }
.t svg { width: 17px; height: 17px; }
.t.sel { background: #b8d6f6; border: 1px solid #5a9fe0; }
.fly::after { content: ""; position: absolute; right: 3px; bottom: 3px; width: 5px; height: 5px; background: linear-gradient(135deg, transparent 50%, #000 50%); }

.sheet {
    width: 1679px;
    display: grid;
    grid-template: 20px 869px 18px / 20px 1642px 17px;
}
.hruler { grid-column: 1 / 4; width: 1679px; height: 20px; border-bottom: 1px solid #888; }
.vruler { width: 20px; height: 887px; grid-row: 2 / 4; grid-column: 1; }
.canvas { position: relative; background: #fff; border-left: 1px solid #777; border-bottom: 1px solid #999; overflow: hidden; }
.page { position: absolute; left: 606px; top: 88px; width: 430px; height: 695px; background: #fff; border: 1px solid #666; box-shadow: 6px 6px 0 -1px #a8a8a8; }
.artistic {
    position: absolute;
    left: 764px;
    top: 223px;
    font: 24.600px/28px "Liberation Sans", Arial, sans-serif;
    transform-origin: 0 0;
    transform: rotate(90deg);
    height: 28px;
    width: 290px;
    color: #222;
}
.handles { position: absolute; left: 730px; top: 212px; width: 42px; height: 310px; display: grid; grid-template-columns: repeat(3, 7px); justify-content: space-between; align-content: space-between; }
.handles i { width: 7px; height: 7px; background: #000; }
.handles .mid { background: none; font: 14px/7px "DejaVu Sans", sans-serif; text-indent: -2px; }
.canvas-sb { padding: 6px 0 7px; position: relative; }
.canvas-sb .thumb { position: absolute; top: 204px; height: 460px; width: 15px; left: 0; }
.pagenav { grid-column: 2 / 4; display: flex; align-items: center; padding-left: 3px; height: 18px; border-left: 1px solid #777; font-size: 12px; }
.pg { width: 10px; height: 12px; }
.nv { width: 8px; height: 10px; margin-left: 8px; }
.count { margin: 0 14px 0 23px; }
.nv + .pg { margin-left: 9px; }
.pagetab { width: 80px; height: 17px; margin-left: 6px; padding-left: 14px; line-height: 16px; background: #cce4fc; border-left: 1px solid #999; clip-path: polygon(0 0, 90% 0, 100% 40%, 100% 100%, 0 100%); }
.hsb { width: 806px; height: 17px; margin-left: 585px; display: flex; align-items: center; justify-content: space-between; background: #f0f0f0; }
.hsb svg { width: 9px; height: 7px; }
.hsb i { width: 774px; height: 15px; background: #cdcdcd; }
.lt { transform: rotate(90deg); }
.rt { transform: rotate(-90deg); }
.mag { width: 13px; height: 12px; margin-left: 3px; }

.docker { width: 211px; border-left: 1px solid #b8b8b8; flex: none; }
.dhead { height: 20px; background: linear-gradient(90deg, #e4f0fc, #d0e6fc); display: flex; align-items: center; padding-left: 8px; font-size: 12px; }
.dhead em { width: 12px; margin: -2px 6px 0 27px; font-size: 16px; color: #555; }
.dmin { width: 17px; height: 17px; margin-right: 3px; border: 1px solid #5a7898; background: linear-gradient(#fff, #fff) no-repeat center 9px/11px 4px, #a8bcd4; border-radius: 2px; }
.dclose { width: 17px; height: 17px; border: 1px solid #702020; background: #c0605c; color: #fff; border-radius: 2px; display: grid; place-items: center; }
.dclose svg { width: 9px; height: 9px; }
.dbody { display: flex; height: 887px; }
.dpanel { width: 184px; padding: 7px 0 0 9px; }
.dpanel > * { width: 170px; }
.d1 { height: 24px; }
.d2 { height: 22px; margin-top: 5px; background: linear-gradient(#f0f0f0, #e6e6e6); padding-left: 4px; }
.drow { display: flex; align-items: center; margin-top: 3px; height: 27px; }
.spin { width: 89px; height: 26px; padding: 0 1px 4px 3px; position: relative; }
.ud { position: absolute; right: 1px; top: 1px; }
.ud i { display: block; width: 17px; height: 11px; border: 1px solid #aaa; background: #f0f0f0; font: 6px/9px "DejaVu Sans", sans-serif; text-align: center; }
.drow .out { width: 14px; height: 18px; margin: 0 12px 0 19px; font-size: 15px; }
.al { width: 15px; height: 15px; }
.drow .dd { margin-left: 11px; }
.off { color: #a0a0a0; }
.drow.off { margin: 5px 0 5px; justify-content: space-between; }
.drow.off .spin { width: 70px; background: #f2f2f2; border-color: #ccc; }
.roll { height: 25px; margin-bottom: 4px; border: 1px solid #a0a0a0; background: linear-gradient(90deg, #d4d4d4, #b2b2b2); display: flex; justify-content: space-between; align-items: center; padding: 0 9px 0 3px; }
.roll b { transform: rotate(90deg); color: #777; font-size: 15px; }
.dtabs { width: 25px; padding-top: 4px; border-left: 1px solid #b8b8b8; position: relative; }
.dt { width: 20px; border: 1px solid #b8b8b8; border-left: none; border-radius: 0 4px 4px 0; display: flex; flex-direction: column; align-items: center; padding-top: 4px; color: #666; }
.dt svg { width: 15px; height: 16px; margin-bottom: 5px; }
.dt span { writing-mode: vertical-rl; width: 14px; }
.a { height: 99px; } .b { height: 60px; } .c { height: 108px; } .d { height: 79px; } .e { height: 126px; } .f { height: 135px; }
.g { height: 161px; width: 24px; margin-left: -1px; }
.act { background: #fff; color: #000; }
.dt .x { width: 8px; height: 8px; margin-top: 8px; color: #888; }
.dtabs em { position: absolute; left: 6px; bottom: 0; font-size: 15px; color: #555; }

.status { height: 45px; background: linear-gradient(#fff, #f0f0f0 10px); border-bottom: 1px solid #b8b8b8; padding-top: 3px; font-size: 12px; }
.status div { position: relative; display: flex; align-items: center; height: 20px; padding-left: 5px; }
.s1 { margin-right: 86px; }
.fill { position: absolute; left: 1716px; top: 0; height: 20px; width: 150px; display: flex; align-items: center; font-size: 11px; }
.fill svg { width: 15px; height: 14px; margin-right: 5px; }
.fill i { width: 18px; height: 18px; border: 1px solid #999; margin-right: 4px; }
.black { background: #181410; }
.none, .nocolor { background: linear-gradient(45deg, transparent 48%, #222 48% 52%, transparent 52%), linear-gradient(-45deg, transparent 48%, #222 48% 52%, transparent 52%), #fff; }

.palette { display: flex; border-top: 1px solid #fff; }
.p1 { height: 37px; border-bottom: 1px solid #b8b8b8; }
.p2 { height: 52px; }
.palette .grip { height: 32px; margin: 2px 4px 0 4px; background: repeating-linear-gradient(#bbb 0 2px, transparent 2px 5px); }
.swatches { background: #fff; display: grid; grid-auto-rows: 17px; align-content: start; }
#pal1 { width: 1904px; height: 34px; grid-template-columns: repeat(112, 17px); }
#pal2 { width: 1887px; grid-template-columns: repeat(111, 17px); height: 51px; overflow: hidden; }
.sw { position: relative; border: 1px solid #5c5c5c; border-width: 1px 1px 0 0; }
.dot::after { content: ""; position: absolute; left: 2px; bottom: 2px; width: 3px; height: 3px; background: #eee; border: 1px solid #777; }
.flyout { border: 2px solid #222; background: linear-gradient(90deg, #fff, #ccc); font: 7px/13px "DejaVu Sans", sans-serif; text-align: center; }
.p2 .sb { width: 16px; padding: 6px 0 6px; position: relative; }
.p2 .sb .thumb { position: absolute; top: 17px; height: 16px; }
```
FILE: script.js
```
// Indeks pomocy, podpozycje poprzedzone spacją
const entries = `orientacja tekstu azjatyckiego
osadzanie
osadzanie (definicja)
 czcionki w pliku PDF
 obiekty w tekście
ostrzeżenia, wyłączanie
oświetlenie
 stosowanie do głębi
 usuwanie z głębi
 w efektach fazy
 wzbogacanie głębi
otwieranie rysunków
paleta kolorów (definicja)
palety kolorów
 dokowanie lub odczepianie
 dostosowywanie
 dostosowywanie próbek kolorów
 edytowanie palet niestandardowych
 gotowe lub niestandardowe
 otwieranie i zamykanie
 tworzenie palet niestandardowych
 tworzenie z dokumentów
 tworzenie z obiektów
 tworzenie z wyników trasowania
 używanie w programie PowerTRACE
palety próbek. Zobacz palety kolorów
palety wysuwane
palety wysuwane przybornika
palety. Zobacz również palety kolorów
pamięć, zwiększanie ilości
PANOSE (definicja)
PANTONE MATCHING SYSTEM
Papier kratkowany (narzędzie)
partnerzy szkoleniowi firmy Corel (Corel Trai
partnerzy technologiczni firmy Corel (Corel T
pasek nawigacyjny (definicja)
pasek stanu
 dodawanie i usuwanie elementów
 dostosowywanie
 ukrywanie lub wyświetlanie
 zmienianie rozmiaru
 zmienianie rozmiaru elementów
pasek właściwości
 dodawanie i usuwanie elementów
 dokowanie i oddokowywanie
 dostosowywanie
 przenoszenie
 zmienianie rozmieszczenia elementów
pasery
 drukowanie
paski kalibracji kolorów
 drukowanie
paski narzędzi
 dodawanie i usuwanie
 dodawanie i usuwanie elementów
 dokowanie i oddokowywanie
 dostosowywanie
 dostosowywanie przycisków
 edytowanie ikon przycisków
 przenoszenie
 zmienianie kształtu i rozmiaru elementów`.split('\n');

document.getElementById('index-list').innerHTML = entries.map((e, i) =>
    `<li class="${i === 0 ? 'chosen' : ''}${e[0] === ' ' ? 'child' : ''}"><span>${e.trim()}</span></li>`).join('');

// Palety kolorów; * oznacza brak znacznika dodatkowego
const row1 = '1a1614 282725 3a3937 4c4b49 5c5b59 6e6d6b 828080 989898 b2b0b1 d6d5d5 ffffff 200c60 0080dc 00882e fff500 c4000f c80060 802c60 d06000 e08490 5c5048 a8a0d0 7870a8 5868a8 5c4890 645c88 3c4468 3a3648 505c78 0068bc 70b4f0 88a0b4 687880 4c545c 303438 3c4c4c 3c6058 486868 408070 448058 48a4b8 40808c 88a090 b0d8bc 70b890 687868 687858 88a050 88a070 78b800 a8d860 383830 5c5c4c 888870 808050 b0b048 fff850 fff878 fffcb0 806850 a86c44 b09048 d86028 e08830 e08850 f0b400 f0b878 584c38 784030 a05028 d86048 e08870 f0b4a0 7c5858 985050 a84c50 c80038 d85c60 cc3850 a06870 5c3c48 784060 e884b0 a86c88 806878 b08c9c 8c4878 a03880 a85c98 886488 b078b0 483848 685070 80509c 780068 683068 5c3078 503858 502860 080808 f058b0 c0a000 c0001c 3098d8 101010 3098d8 f8d028 1c449c 209c28 18288c'.split(' ');
const row2 = '*807868 1c4880 987c00 *741428 205090 f09400 2c80c8 e86800 a8c8e4 30a83c 2878c0 7cbce0 1c4890 68c4e4 2064a0 307c14 9c0038 2458c4 d4ac00 2048c0 641038 1c5078 0c1c2c 288c5c e05800'.split(' ');
const pantone = ('f0d800 f4d400 dc5800 e42418 d81028 b40048 d00090 a400ac 540098 200098 180080 2878c8 34a884 28201c f0e400 c00060 3094d0 201e1c ffffff f4dc00 e86800 cc0078 2c7cc8 30a044 181818 eeec64 eee834 f0e400 f0dc00 b49c00 948400 686000 f0e440 f0e000 ' +
    'f0d800 f0cc00 c8a800 948000 807000 f0e040 f4e420 f4d820 f0c400 b89000 a08000 786400 f4dc50 f4d850 f4cc28 f4bc00 d09c00 b08400 886400 f0dc80 f0d870 f4bc30 eca000 b08400 906c00 685000 e8dc50 e4d038 e4c020 d8a000 b88000 8c6400 604800 f4cc60 f4bc48 f4ac10 e89000 c47000 986000 684400 f4c068 f4b858 f4a438 f08c00 b06000 885000 583400 e4c038 e0b020 dc9c00 cc7800 ac6800 805000 584008 f4c078 f4b468 f09438 e06800 c85800 a85400 804400 f09c60 f06820 e06400 e05800 a84400 984000 401c00 e8cc90 e0b060 d88c30 cc5800 a84800 804000 482808 ' +
    'f4b08c f0945c ec7028 e85800 bc4c00 843800 682c00 f8b490 f08c58 ec682c e84c00 c04400 a03c00 502008 f09070 f07850 f05020 e03c00 b83400 882c00 682408 f4a098 f07460 ec4428 e03400 bc2c00 7c2008 582410 f498a0 f06470 ec3c40 e42014 c82014 a42014 601c10 f48494 ' +
    'f06478 e82840 dc0018 c00818 981420 581410 f8a0b0 f06078 e82840 dc0028 b40020 881420 481c18 f49cb0 f07490 ec4460 d80020 b80020 8c0020 581820 f490b0 f07098 e02058 d00038 a80028 880028 581828 f4b0cc f080a8 e43878 d00038 b00030 880030 680028 e8b8c4 e08898 cc3050 c00028 a80020 8c0820 701020 ec9cc0 dc6098 d03070 b40038 900038 781038 501028 f890c0 f060a8 ec2888 d80068 b00058 880048 580028 e8a8d4 dc50a8 cc0078 b40060 980058 780048 501030 f070c0 ec48ac d80088 b80070 980060 700048 501030 f498d0 f050b4 e81098 d80088 b80070 880058 ' +
    '680038 f098d0 e868c0 dc30a8 cc0094 b00078 900060 600040 f0b0d8 dc50b8 c80098 b00080 900068 800060 680048 e4a0d8 e088d0 d460c4 b00090 980080 880070 601050 e0a8d8 d480d4 bc48c0 a000ac 900090 800080 581058 d4a8d0 c088c0 803088 580058 481048 481040 401838 ' +
    'd088d8 b868d0 9028b8 7c00a0 680080 500060 401040 c088d0 a868b8 8c38a0 6c1080 580068 400050 b088d0 9860c0 7828a8 500080 480070 380060 300048 d4c0e8 b0a0e0 8050c8 6010a8 480080 381060 381850 b8a0d8 a080d0 8858c8 7030b8 5800a0 400078 300050 b0a0d8 a498d0 8470c0 7060b0 280068 200050 180040 181030 a890d8 8870d0 5c30b8 400090 300070 200058 200040 c8c0e8 8c88d8 4c38b8 380098 280080 201058 181040 c0c8e8 a0b0e0 4460d0 180098 181470 101850 101440 b0b8e0 5868cc 2828b0 200090 180868 101450 101840 a8b8e0 88a8e0 4c70d0 180098 101470').split(' ');

const lead = '<i class="sw flyout">▶</i><i class="sw nocolor"></i>';
function swatch(color, dot) {
    const plain = color[0] === '*';
    return `<i class="sw ${dot && !plain ? 'dot' : ''}" style="background:#${color.replace('*', '')}"></i>`;
}
document.getElementById('pal1').innerHTML = lead +
    row1.map((c, i) => swatch(c, i > 99 && i !== 104 && i !== 108)).join('') +
    row2.map(c => swatch(c, true)).join('');
document.getElementById('pal2').innerHTML = lead + pantone.map(c => swatch(c, true)).join('');

// Linijki: 100 mm = 50,68 px
const STEP = 5.068;
function ruler(id, vertical, zero, from, to) {
    let ticks = '', labels = '';
    for (let n = from; n <= to; n++) {
        const p = Math.round(zero + n * STEP) + 0.5;
        const len = n % 10 === 0 ? 7 : n % 5 === 0 ? 4 : 2;
        if (vertical || p > 21) {
            ticks += vertical ? `M${19 - len} ${p}h${len}` : `M${p} ${19 - len}v${len}`;
        }
        if (n % 10 === 0) {
            const t = Math.abs(n * 10);
            labels += vertical
                ? (p < 850 ? `<text transform="translate(15 ${p}) rotate(-90)">${t}</text>` : '')
                : (p > 30 && p < 1620 ? `<text x="${p}" y="11">${t}</text>` : '');
        }
    }
    document.getElementById(id).innerHTML =
        `<path d="${ticks}" stroke="#111" fill="none"/><g font-size="10" text-anchor="middle" letter-spacing="-.4">${labels}</g>` +
        (vertical
            ? '<text font-size="11" text-anchor="middle" transform="translate(14 864) rotate(-90)" textLength="38" lengthAdjust="spacingAndGlyphs">milimetry</text><path d="M4 117.5h14" stroke="#111" stroke-dasharray="3 2"/>'
            : '<text font-size="10" x="21" y="11" textLength="7">0</text><text font-size="11" x="1636" y="12" textLength="39" lengthAdjust="spacingAndGlyphs">milimetry</text><path d="M647.5 3v15" stroke="#111" stroke-dasharray="3 2"/><path d="M10 8v10M6 11h12M12 13l4 4" stroke="#111" stroke-dasharray="2 1"/>');
}
ruler('hruler', false, 626.6, -119, 206);
ruler('vruler', true, 782.6, -154, 19);

// Dopasowanie szerokości napisów
document.querySelectorAll('[data-w]').forEach(el => {
    const w = +el.dataset.w, natural = el.scrollWidth > el.offsetWidth ? el.scrollWidth : el.offsetWidth;
    el.style.width = w + 'px';
    el.style.transform = `scaleX(${w / natural})`;
});
document.querySelectorAll('[data-h]').forEach(el => {
    const h = +el.dataset.h, natural = el.offsetHeight;
    el.style.height = h + 'px';
    el.style.transform = `scaleY(${h / natural})`;
});
```
